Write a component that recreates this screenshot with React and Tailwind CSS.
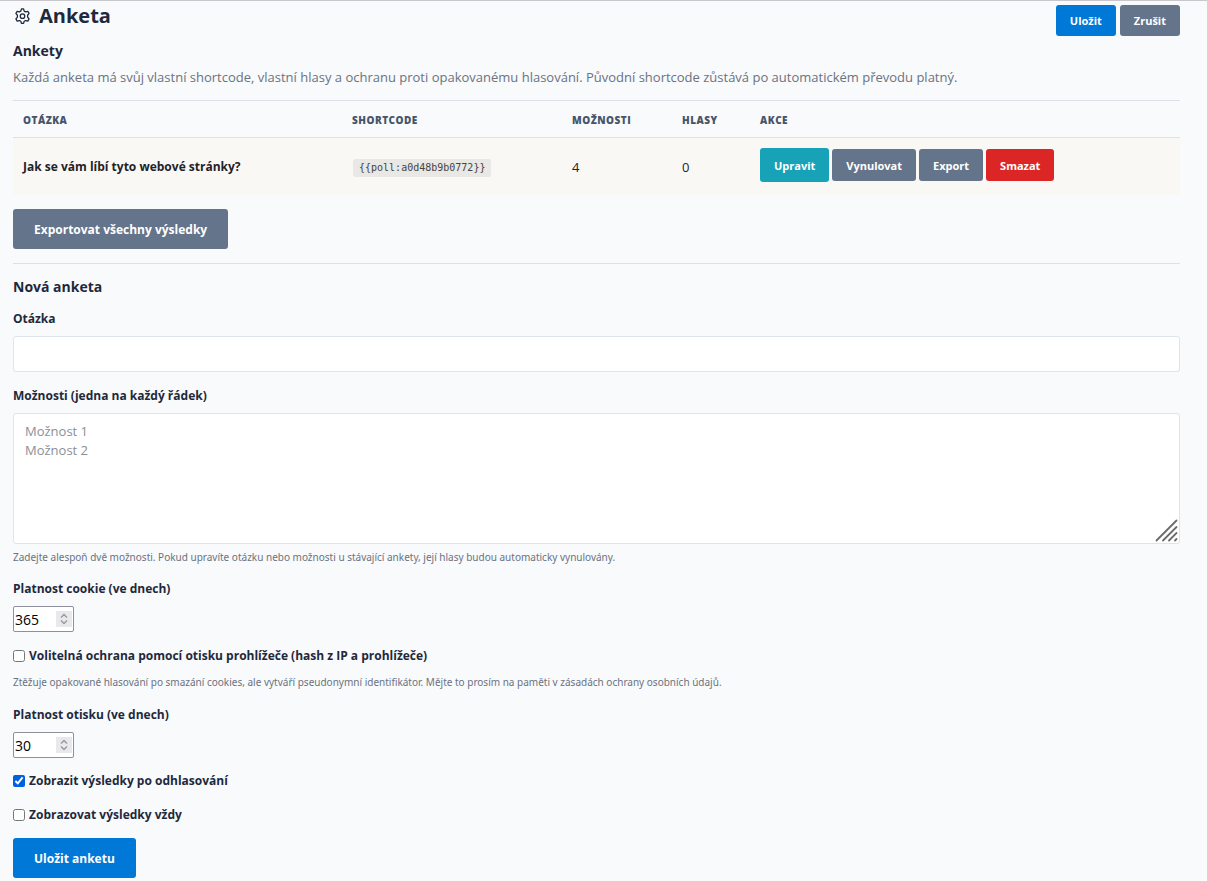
import React, { useState } from 'react';

const polls = [
  { id: 'a0d48b9b0772', question: 'Jak se vám líbí tyto webové stránky?', options: 4, votes: 0 },
];

const GearIcon = () => (
  <svg width="17" height="17" viewBox="0 0 16 16" fill="none" stroke="currentColor" strokeWidth="1.2" strokeLinejoin="round" aria-hidden="true">
    <path d="M7 .9h2l.6 2 1.3.7 2.1-.5 1.2 2-1.4 1.7v1.8l1.4 1.7-1.2 2-2.1-.5-1.3.7-.6 2H7l-.6-2-1.3-.7-2.1.5-1.2-2 1.4-1.7V6.8L1.8 5.1l1.2-2 2.1.5 1.3-.7z" />
    <circle cx="8" cy="7.7" r="2.1" />
  </svg>
);

const Button = ({ className, children }) => (
  <button type="button" className={`rounded-[3px] pt-0.5 font-bold text-white ${className}`}>
    {children}
  </button>
);

const Hint = ({ className, children }) => (
  <p className={`font-['Noto_Sans',sans-serif] text-[10px] leading-4 text-[#6b7280] ${className}`}>{children}</p>
);

const NumberField = ({ id, label, value, onChange }) => (
  <>
    <label htmlFor={id} className="block text-xs leading-5 font-bold">{label}</label>
    <div className="relative mt-[7px] w-[61px]">
      <input
        id={id}
        type="number"
        value={value}
        onChange={(e) => onChange(e.target.value)}
        className="block h-[26px] w-full appearance-none rounded-[2px] border border-[#8f8f9d] bg-white pt-0.5 pl-px text-sm text-black [appearance:textfield]"
      />
      <span className="pointer-events-none absolute top-[5px] right-0.5 flex h-4 w-4 items-center justify-center bg-[#e9e9ed]">
        <svg width="8" height="12" viewBox="0 0 8 12" fill="none" stroke="#9a9a9f" strokeWidth="1.5" aria-hidden="true">
          <path d="M1 4.5l3-3 3 3M1 7.5l3 3 3-3" />
        </svg>
      </span>
    </div>
  </>
);

const CheckField = ({ className, label, defaultChecked }) => (
  <label className={`flex w-fit items-center gap-1 text-xs leading-5 font-bold ${className}`}>
    <input type="checkbox" defaultChecked={defaultChecked} className="h-3 w-3 accent-[#0060df]" />
    {label}
  </label>
);

const App = () => {
  const [cookieDays, setCookieDays] = useState('365');
  const [fingerprintDays, setFingerprintDays] = useState('30');

  return (
    <main className="min-h-screen border-t border-[#c8c8cc] bg-[#f8fafc] pr-[27px] pb-[3px] pl-[13px] font-['Open_Sans','Noto_Sans',sans-serif] text-[13px] text-[#1e293b]">
      <header className="flex items-start justify-between pb-px">
        <h1 className="flex items-center gap-2 pl-px text-xl leading-[30px] font-bold">
          <GearIcon />
          Anketa
        </h1>
        <div className="flex gap-1 pt-1">
          <Button className="h-[31px] bg-[#0078d7] px-3.5 text-[11px]">Uložit</Button>
          <Button className="h-[31px] bg-[#64748b] px-3.5 text-[11px]">Zrušit</Button>
        </div>
      </header>

      <section>
        <h2 className="text-sm leading-7 font-bold">Ankety</h2>
        <p className="mt-0.5 leading-5 text-[#6b7280]">
          Každá anketa má svůj vlastní shortcode, vlastní hlasy a ochranu proti opakovanému hlasování. Původní shortcode zůstává po automatickém převodu platný.
        </p>

        <table className="mt-[13px] w-full table-fixed border-t border-[#dbe1ea] text-left">
          <thead>
            <tr className="h-[37px] border-b border-[#dbe1ea] text-[10px] tracking-wider text-[#475569] uppercase">
              <th className="w-[329px] px-2.5 pt-0.5 font-extrabold">Otázka</th>
              <th className="w-[220px] px-2.5 pt-0.5 font-extrabold">Shortcode</th>
              <th className="w-[110px] px-2.5 pt-0.5 font-extrabold">Možnosti</th>
              <th className="w-[78px] px-2.5 pt-0.5 font-extrabold">Hlasy</th>
              <th className="px-2.5 pt-0.5 font-extrabold">Akce</th>
            </tr>
          </thead>
          <tbody>
            {polls.map((poll) => (
              <tr key={poll.id} className="h-[57px] bg-[#faf8f5] text-[#1f2328]">
                <td className="px-2.5 pt-0.5 text-xs font-bold">{poll.question}</td>
                <td className="px-2.5 pt-0.5">
                  <code className="ml-px inline-block rounded-[2px] bg-[#e9e8e5] px-1.5 font-['DejaVu_Sans_Mono',monospace] text-[10px] leading-[18px] text-[#444]">
                    {`{{poll:${poll.id}}}`}
                  </code>
                </td>
                <td className="px-2.5 pt-0.5">{poll.options}</td>
                <td className="px-2.5 pt-0.5">{poll.votes}</td>
                <td className="px-2.5">
                  <div className="flex items-center gap-[3px] pb-0.5">
                    <Button className="h-[34px] bg-[#17a2b8] px-3.5 text-[11px]">Upravit</Button>
                    <Button className="h-8 bg-[#64748b] px-3.5 text-[11px]">Vynulovat</Button>
                    <Button className="h-8 bg-[#64748b] px-3.5 text-[11px]">Export</Button>
                    <Button className="h-8 bg-[#dc2626] px-3.5 text-[11px]">Smazat</Button>
                  </div>
                </td>
              </tr>
            ))}
          </tbody>
        </table>

        <Button className="mt-3.5 block h-10 bg-[#64748b] px-[21px] text-xs">Exportovat všechny výsledky</Button>
      </section>

      <hr className="mt-3.5 border-[#dbe1ea]" />

      <form onSubmit={(e) => e.preventDefault()}>
        <h2 className="mt-[9px] text-sm leading-7 font-bold">Nová anketa</h2>

        <label htmlFor="question" className="mt-2 block text-xs leading-5 font-bold">Otázka</label>
        <input id="question" type="text" className="mt-[7px] block h-9 w-full rounded-[3px] border border-[#dfe3ea] bg-white px-[11px]" />

        <label htmlFor="options" className="mt-3.5 block text-xs leading-5 font-bold">Možnosti (jedna na každý řádek)</label>
        <div className="relative mt-[7px]">
          <textarea
            id="options"
            placeholder={'Možnost 1\nMožnost 2'}
            className="block h-[131px] w-full resize-none rounded-[3px] border border-[#dfe3ea] bg-white px-[11px] py-2 leading-[19px] placeholder:text-[#8a8f98]"
          />
          <svg className="pointer-events-none absolute right-0.5 bottom-0.5" width="23" height="23" viewBox="0 0 23 23" stroke="#6b6b6b" strokeWidth="1.8" strokeLinecap="round" aria-hidden="true">
            <path d="M1.5 21.5l20-20M8 21.5L21.5 8M14 21.5l7.5-7.5M20 21.5l1.5-1.5" />
          </svg>
        </div>
        <Hint className="mt-[5px] mb-3.5">
          Zadejte alespoň dvě možnosti. Pokud upravíte otázku nebo možnosti u stávající ankety, její hlasy budou automaticky vynulovány.
        </Hint>

        <NumberField id="cookie-days" label="Platnost cookie (ve dnech)" value={cookieDays} onChange={setCookieDays} />

        <CheckField className="mt-3.5" label="Volitelná ochrana pomocí otisku prohlížeče (hash z IP a prohlížeče)" />
        <Hint className="mt-2 mb-[15px]">
          Ztěžuje opakované hlasování po smazání cookies, ale vytváří pseudonymní identifikátor. Mějte to prosím na paměti v zásadách ochrany osobních údajů.
        </Hint>

        <NumberField id="fingerprint-days" label="Platnost otisku (ve dnech)" value={fingerprintDays} onChange={setFingerprintDays} />

        <CheckField className="mt-[13px]" label="Zobrazit výsledky po odhlasování" defaultChecked />
        <CheckField className="mt-3.5" label="Zobrazovat výsledky vždy" />

        <Button className="mt-[13px] block h-10 bg-[#0078d7] px-[21px] text-xs">Uložit anketu</Button>
      </form>
    </main>
  );
};

export default App;
